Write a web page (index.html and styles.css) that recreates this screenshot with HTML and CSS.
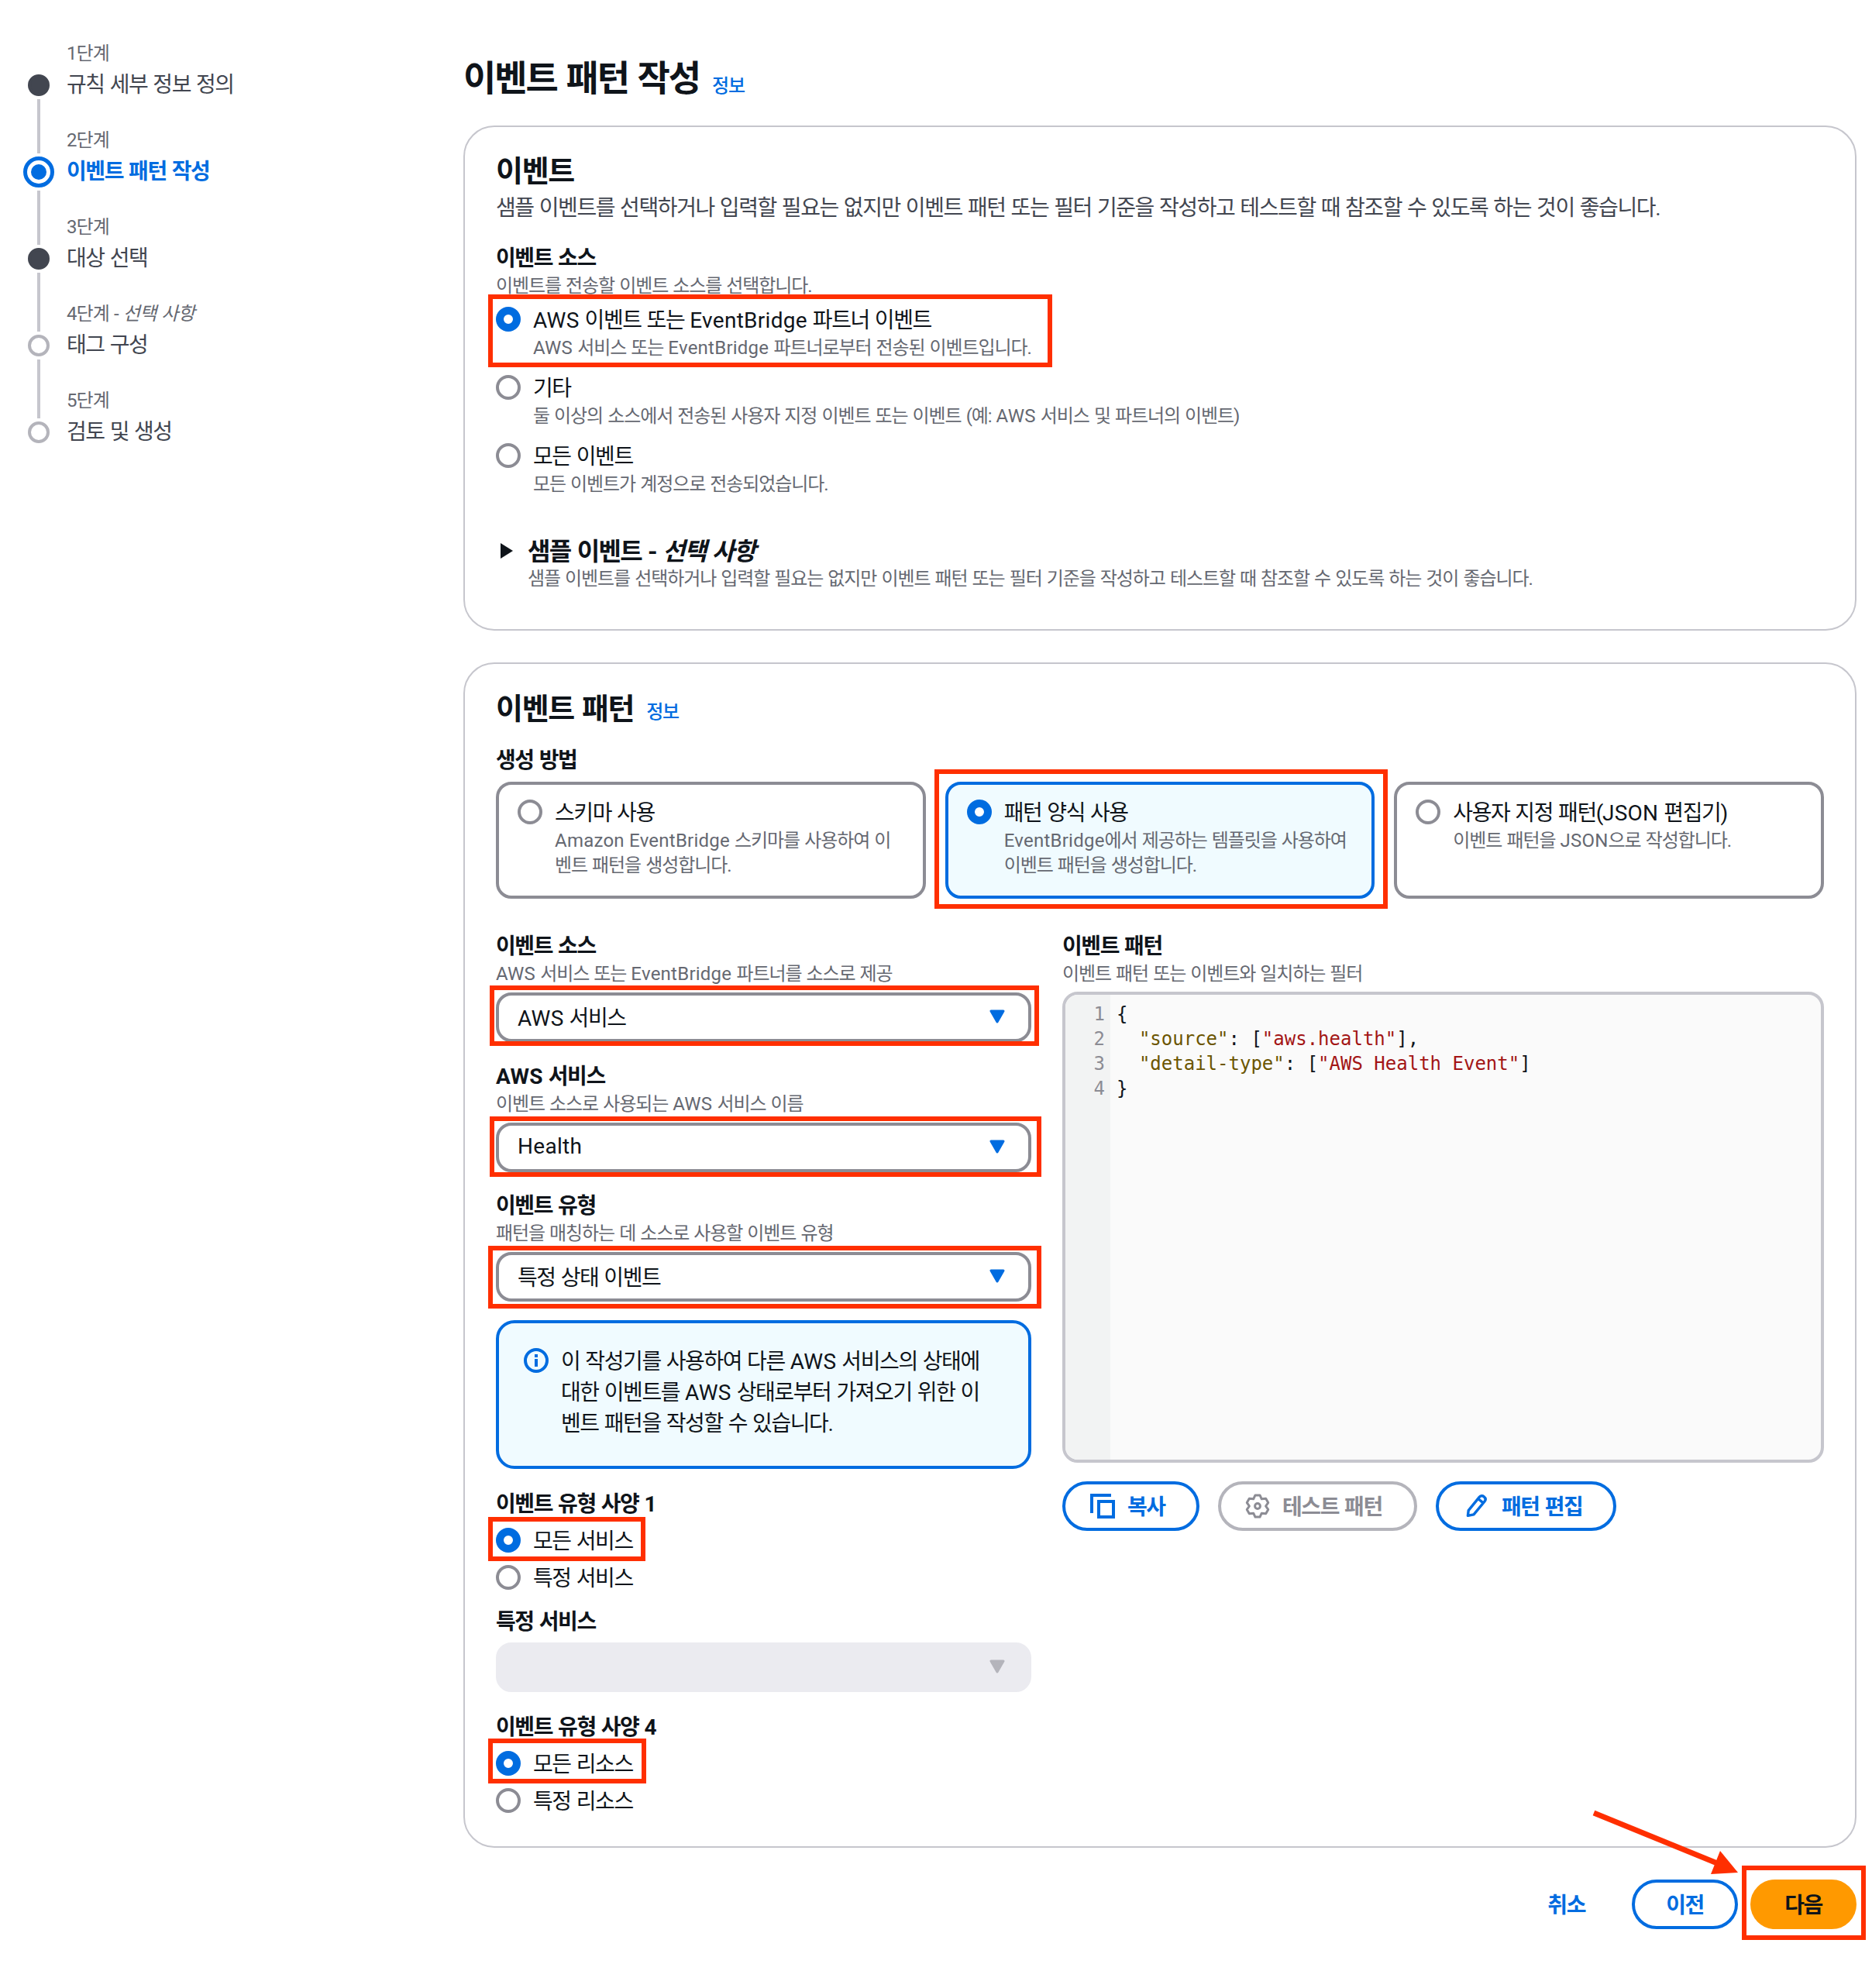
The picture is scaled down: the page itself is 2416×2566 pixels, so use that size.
FILE: index.html
```html
<!DOCTYPE html>
<html lang="ko">
<head>
<meta charset="utf-8">
<title>이벤트 패턴 작성</title>
<link rel="stylesheet" href="styles.css">
</head>
<body>
<div class="page">
  <nav class="steps">
    <div class="step step-first step-done"><span class="step-no">1단계</span><span class="dot"></span><span class="step-name">규칙 세부 정보 정의</span></div>
    <div class="step step-current"><span class="step-no">2단계</span><span class="dot"></span><span class="step-name">이벤트 패턴 작성</span></div>
    <div class="step step-done"><span class="step-no">3단계</span><span class="dot"></span><span class="step-name">대상 선택</span></div>
    <div class="step"><span class="step-no">4단계 - <i>선택 사항</i></span><span class="dot"></span><span class="step-name">태그 구성</span></div>
    <div class="step"><span class="step-no">5단계</span><span class="dot"></span><span class="step-name">검토 및 생성</span></div>
  </nav>

  <main class="main">
    <header class="page-head"><h1>이벤트 패턴 작성</h1><a class="info h1-info">정보</a></header>

    <section class="card card-event">
      <h2>이벤트</h2>
      <p class="lead">샘플 이벤트를 선택하거나 입력할 필요는 없지만 이벤트 패턴 또는 필터 기준을 작성하고 테스트할 때 참조할 수 있도록 하는 것이 좋습니다.</p>
      <div class="label label-first">이벤트 소스</div>
      <div class="sub">이벤트를 전송할 이벤트 소스를 선택합니다.</div>
      <div class="radio-blocks">
        <div class="radio-block"><span class="radio on"></span><div><div class="opt"><span class="en">AWS</span> 이벤트 또는 <span class="en">EventBridge</span> 파트너 이벤트</div><div class="sub"><span class="en">AWS</span> 서비스 또는 <span class="en">EventBridge</span> 파트너로부터 전송된 이벤트입니다.</div></div></div>
        <div class="radio-block"><span class="radio"></span><div><div class="opt">기타</div><div class="sub">둘 이상의 소스에서 전송된 사용자 지정 이벤트 또는 이벤트 (예: <span class="en">AWS</span> 서비스 및 파트너의 이벤트)</div></div></div>
        <div class="radio-block"><span class="radio"></span><div><div class="opt">모든 이벤트</div><div class="sub">모든 이벤트가 계정으로 전송되었습니다.</div></div></div>
      </div>
      <div class="expander">
        <svg class="caret" viewBox="0 0 16 20"><polygon points="0,0 16,10 0,20"/></svg>
        <div>
          <div class="expander-title">샘플 이벤트 - <i>선택 사항</i></div>
          <div class="sub">샘플 이벤트를 선택하거나 입력할 필요는 없지만 이벤트 패턴 또는 필터 기준을 작성하고 테스트할 때 참조할 수 있도록 하는 것이 좋습니다.</div>
        </div>
      </div>
    </section>

    <section class="card card-pattern">
      <div class="card-head"><h2>이벤트 패턴</h2><a class="info card-info">정보</a></div>
      <div class="label label-method">생성 방법</div>
      <div class="tiles">
        <div class="tile"><span class="radio"></span><div><div class="opt">스키마 사용</div><div class="sub"><span class="en">Amazon EventBridge</span> 스키마를 사용하여 이<br>벤트 패턴을 생성합니다.</div></div></div>
        <div class="tile tile-on"><span class="radio on"></span><div><div class="opt">패턴 양식 사용</div><div class="sub"><span class="en">EventBridge</span>에서 제공하는 템플릿을 사용하여<br>이벤트 패턴을 생성합니다.</div></div></div>
        <div class="tile"><span class="radio"></span><div><div class="opt">사용자 지정 패턴(<span class="en">JSON</span> 편집기)</div><div class="sub">이벤트 패턴을 <span class="en">JSON</span>으로 작성합니다.</div></div></div>
      </div>

      <div class="columns">
        <div class="col-form">
          <div class="field">
            <div class="label">이벤트 소스</div>
            <div class="sub sub-field"><span class="en">AWS</span> 서비스 또는 <span class="en">EventBridge</span> 파트너를 소스로 제공</div>
            <div class="select"><span><span class="en">AWS</span> 서비스</span><svg class="arrow" viewBox="0 0 20 18"><path d="M2 2H18L10 16Z"/></svg></div>
          </div>
          <div class="field">
            <div class="label"><span class="en">AWS</span> 서비스</div>
            <div class="sub sub-field">이벤트 소스로 사용되는 <span class="en">AWS</span> 서비스 이름</div>
            <div class="select"><span class="en">Health</span><svg class="arrow" viewBox="0 0 20 18"><path d="M2 2H18L10 16Z"/></svg></div>
          </div>
          <div class="field">
            <div class="label">이벤트 유형</div>
            <div class="sub sub-field">패턴을 매칭하는 데 소스로 사용할 이벤트 유형</div>
            <div class="select"><span>특정 상태 이벤트</span><svg class="arrow" viewBox="0 0 20 18"><path d="M2 2H18L10 16Z"/></svg></div>
          </div>
          <div class="alert">
            <svg class="alert-icon" viewBox="0 0 32 32"><circle cx="16" cy="16" r="14" /><path d="M16 14V24"/><path d="M16 8V12"/></svg>
            <p>이 작성기를 사용하여 다른 <span class="en">AWS</span> 서비스의 상태에<br>대한 이벤트를 <span class="en">AWS</span> 상태로부터 가져오기 위한 이<br>벤트 패턴을 작성할 수 있습니다.</p>
          </div>
          <div class="label label-spec">이벤트 유형 사양 1</div>
          <div class="radio-rows">
            <div class="radio-row"><span class="radio on"></span><span class="opt">모든 서비스</span></div>
            <div class="radio-row"><span class="radio"></span><span class="opt">특정 서비스</span></div>
          </div>
          <div class="label label-specific">특정 서비스</div>
          <div class="select select-off"><span></span><svg class="arrow" viewBox="0 0 20 18"><path d="M2 2H18L10 16Z"/></svg></div>
          <div class="label label-spec">이벤트 유형 사양 4</div>
          <div class="radio-rows">
            <div class="radio-row"><span class="radio on"></span><span class="opt">모든 리소스</span></div>
            <div class="radio-row"><span class="radio"></span><span class="opt">특정 리소스</span></div>
          </div>
        </div>

        <div class="col-editor">
          <div class="label">이벤트 패턴</div>
          <div class="sub sub-field">이벤트 패턴 또는 이벤트와 일치하는 필터</div>
          <div class="editor">
            <div class="gutter"><div class="num">1</div><div class="num">2</div><div class="num">3</div><div class="num">4</div></div>
            <div class="code">
              <div class="line">{</div>
              <div class="line">  <span class="k">"source"</span>: [<span class="s">"aws.health"</span>],</div>
              <div class="line">  <span class="k">"detail-type"</span>: [<span class="s">"AWS Health Event"</span>]</div>
              <div class="line">}</div>
            </div>
          </div>
          <div class="actions">
            <button class="btn btn-copy"><svg class="btn-icon" viewBox="0 0 32 32"><path d="M2 25V2H27"/><rect x="11" y="10" width="19" height="20"/></svg><span class="btn-text">복사</span></button>
            <button class="btn btn-test"><svg class="btn-icon gear" viewBox="0 0 16 16"><polygon points="6.5,0.96 9.5,0.96 10.65,3.41 13.35,3.18 14.85,5.78 13.3,8 14.85,10.22 13.35,12.82 10.65,12.59 9.5,15.04 6.5,15.04 5.35,12.59 2.65,12.82 1.15,10.22 2.7,8 1.15,5.78 2.65,3.18 5.35,3.41"/><circle cx="8" cy="8" r="1.7"/></svg><span class="btn-text">테스트 패턴</span></button>
            <button class="btn btn-edit"><svg class="btn-icon pencil" viewBox="0 0 16 16"><path d="M2.2 14.2L2.6 10.8L9.6 2.2C10.4 1.2 11.6 1.1 12.6 1.9C13.7 2.8 13.8 4 13 5L6 13.4Z"/><path d="M9 3.4L12.4 6.2"/></svg><span class="btn-text">패턴 편집</span></button>
          </div>
        </div>
      </div>
    </section>

    <footer class="footer">
      <a class="cancel">취소</a>
      <button class="btn btn-prev"><span class="btn-text">이전</span></button>
      <button class="btn btn-next"><span class="btn-text">다음</span></button>
    </footer>
  </main>

  <div class="mark mark-source"></div>
  <div class="mark mark-tile"></div>
  <div class="mark mark-sel1"></div>
  <div class="mark mark-sel2"></div>
  <div class="mark mark-sel3"></div>
  <div class="mark mark-svc"></div>
  <div class="mark mark-res"></div>
  <div class="mark mark-next"></div>
  <svg class="mark-arrow" viewBox="0 0 200 90"><path class="shaft" d="M1 1L170 70"/><polygon class="head" points="164,50 187,78 152,80"/></svg>
</div>
</body>
</html>
```
FILE: styles.css
```css
* { box-sizing: border-box; letter-spacing: -0.05em; word-spacing: 0.05em; }
html, body { margin: 0; padding: 0; background: #fff; }
body {
  font-family: Roboto, "Noto Sans CJK KR", "Noto Sans", sans-serif;
  color: #0f141a;
}
i { font-style: italic; }
h1, h2, p { margin: 0; }
.en { letter-spacing: 0.01em; word-spacing: 0; }

.page { position: relative; display: flex; width: 2416px; height: 2566px; overflow: hidden; }

/* steps */
.steps { width: 598px; flex: none; padding: 52px 0 0 30px; }
.step {
  position: relative;
  display: grid;
  grid-template-columns: 40px 1fr;
  grid-template-rows: 32px 52px;
  column-gap: 16px;
  height: 112px;
  align-items: center;
}
.step:not(:last-child)::after {
  content: "";
  position: absolute;
  left: 18px;
  top: 76px;
  width: 4px;
  height: 76px;
  background: #c6c6cd;
}
.step-first::after { height: 70px !important; }
.step-current::after { top: 82px !important; height: 70px !important; }
.step-no { grid-column: 2; grid-row: 1; font-size: 24px; line-height: 32px; padding-top: 1px; color: #656871; letter-spacing: -0.04em; }
.step-no i { letter-spacing: -0.025em; }
.dot {
  grid-column: 1; grid-row: 2; justify-self: center;
  width: 28px; height: 28px; border-radius: 50%;
  border: 4px solid #b4b4bb; background: #fff;
}
.step-done .dot { background: #424650; border-color: #424650; }
.step-current .dot { position: relative; width: 40px; height: 40px; border: 5px solid #006ce0; }
.step-current .dot::after { content: ""; position: absolute; inset: 5px; border-radius: 50%; background: #006ce0; }
.step-name { grid-column: 2; grid-row: 2; font-size: 28px; line-height: 40px; color: #424650; }
.step-current .step-name { color: #006ce0; font-weight: 700; }

/* main */
.main { width: 1798px; flex: none; }
.page-head { display: flex; align-items: center; gap: 16px; height: 60px; margin: 68px 0 34px; }
h1 { font-size: 46px; line-height: 54px; padding-top: 6px; font-weight: 700; letter-spacing: -0.045em; }
h2 { font-size: 38px; line-height: 38px; padding-top: 6px; font-weight: 700; letter-spacing: -0.035em; }
.info { font-size: 24px; line-height: 32px; font-weight: 500; color: #006ce0; }
.h1-info { margin-top: 25px; }
.card-info { margin-top: 14px; }

.card { border: 2px solid #c6c6cd; border-radius: 40px; background: #fff; padding-left: 40px; padding-right: 40px; }
.card-event { height: 652px; padding-top: 32px; }
.card-pattern { margin-top: 41px; padding-top: 32px; height: 1530px; }

.lead { font-size: 28px; line-height: 40px; margin-top: 9px; color: #424650; }
.label { font-size: 28px; line-height: 30px; padding-top: 6px; font-weight: 700; }
.label-first { margin-top: 24px; }
.sub { font-size: 24px; line-height: 32px; color: #656871; letter-spacing: -0.045em; }
.card-event > .sub { margin-top: 4px; }
.opt { font-size: 28px; line-height: 33px; padding-top: 3px; }

.radio { flex: none; display: block; width: 32px; height: 32px; border-radius: 50%; border: 4px solid #8c8c94; background: #fff; }
.radio.on { border: 10px solid #006ce0; }

.radio-blocks { display: flex; flex-direction: column; gap: 17px; margin-top: 9px; }
.radio-block { display: flex; gap: 16px; }
.radio-block .radio { margin-top: 2px; }
.radio-block .sub { margin-top: 3px; }

.expander { display: flex; gap: 19px; margin-top: 50px; padding-left: 6px; }
.caret { width: 16px; height: 20px; margin-top: 10px; flex: none; fill: #0f141a; }
.expander-title { font-size: 32px; line-height: 37px; padding-top: 3px; font-weight: 700; }

.card-head { display: flex; align-items: center; gap: 16px; height: 45px; }
.label-method { margin-top: 27px; }
.tiles { display: grid; grid-template-columns: repeat(3, 1fr); gap: 25px; margin-top: 12px; height: 151px; }
.tile { display: flex; gap: 16px; border: 4px solid #8c8c94; border-radius: 20px; padding: 17px 24px 0; background: #fff; }
.tile .radio { margin-top: 2px; }
.tile .sub { margin-top: 3px; }
.tile-on { border-color: #006ce0; background: #f0fbff; }

.columns { display: grid; grid-template-columns: 691px 983px; column-gap: 40px; margin-top: 41px; }
.field + .field { margin-top: 23.5px; }
.sub-field { margin-top: 4px; }
.select {
  display: flex; align-items: center; justify-content: space-between;
  height: 64px; margin-top: 8px; padding: 0 30px 2px 24px;
  border: 4px solid #8c8c94; border-radius: 20px; background: #fff;
  font-size: 28px;
}
.arrow { width: 20px; height: 18px; fill: #006ce0; stroke: #006ce0; stroke-width: 3; stroke-linejoin: round; }
.select-off { margin-top: 10px; border-color: #ebebf0; background: #ebebf0; }
.select-off .arrow { fill: #b4b4bb; stroke: #b4b4bb; }

.alert {
  display: flex; gap: 16px; height: 192px; margin-top: 24px;
  padding: 30px 32px 0; border: 4px solid #006ce0; border-radius: 24px; background: #f0fbff;
}
.alert p { font-size: 28px; line-height: 40px; }
.alert-icon { width: 32px; height: 32px; margin-top: 2px; flex: none; fill: none; stroke: #006ce0; stroke-width: 4; }

.label-spec { margin-top: 26px; padding-top: 4px; line-height: 32px; }
.label-specific { margin-top: 20px; padding-top: 4px; line-height: 32px; }
.radio-rows { display: flex; flex-direction: column; gap: 12px; margin-top: 12px; }
.radio-row { display: flex; align-items: center; gap: 16px; height: 36px; }

.editor { display: flex; height: 608px; margin-top: 7px; border: 4px solid #c6c6cd; border-radius: 20px; background: #fafafa; overflow: hidden; font-family: "DejaVu Sans Mono", "Liberation Mono", monospace; font-size: 24px; line-height: 32px; }
.num, .line, .k, .s { letter-spacing: 0; word-spacing: 0; }
.gutter { width: 58px; flex: none; padding: 9px 7px 0 0; text-align: right; background: #f2f3f3; color: #8c8c94; }
.code { padding: 9px 0 0 8px; color: #0f141a; }
.line { white-space: pre; }
.k { color: #6b5500; }
.s { color: #a31515; }

.actions { display: flex; gap: 24px; margin-top: 24px; }
.btn {
  display: inline-flex; align-items: center; justify-content: center;
  height: 64px; border: 4px solid #006ce0; border-radius: 32px; background: #fff;
  color: #006ce0; font-family: inherit; font-size: 28px; font-weight: 700; padding: 0;
}
.btn-text { padding-bottom: 2px; }
.actions .btn { justify-content: flex-start; gap: 16px; }
.btn-copy { width: 177px; padding-left: 32px; }
.btn-test { width: 257px; padding-left: 31px; border-color: #b4b4bb; color: #8c8c94; }
.btn-edit { width: 233px; padding-left: 33px; }
.btn-icon { width: 32px; height: 32px; flex: none; fill: none; stroke: currentColor; stroke-width: 4; }
.gear { stroke-width: 1.5; stroke-linejoin: round; }
.pencil { stroke-width: 1.7; stroke-linejoin: round; }

.footer { display: flex; align-items: center; justify-content: flex-end; gap: 16px; margin-top: 41px; }
.cancel { margin-right: 44px; padding-bottom: 2px; font-size: 28px; font-weight: 700; color: #006ce0; }
.btn-prev, .btn-next { width: 137px; }
.btn-next { background: #ff9900; border-color: #ff9900; color: #0f141a; }

/* red annotations drawn on top of the screenshot */
.mark { position: absolute; border: 6px solid #ff2f00; }
.mark-source { left: 630px; top: 380px; width: 728px; height: 94px; }
.mark-tile { left: 1206px; top: 993px; width: 585px; height: 180px; }
.mark-sel1 { left: 632px; top: 1272px; width: 709px; height: 78px; }
.mark-sel2 { left: 632px; top: 1441px; width: 712px; height: 78px; }
.mark-sel3 { left: 630px; top: 1608px; width: 714px; height: 81px; }
.mark-svc { left: 630px; top: 1958px; width: 203px; height: 57px; }
.mark-res { left: 630px; top: 2244px; width: 204px; height: 58px; }
.mark-next { left: 2248px; top: 2408px; width: 160px; height: 96px; }
.mark-arrow { position: absolute; left: 2056px; top: 2339px; width: 200px; height: 90px; overflow: visible; }
.shaft { stroke: #ff2f00; stroke-width: 7; fill: none; }
.head { fill: #ff2f00; }
```
